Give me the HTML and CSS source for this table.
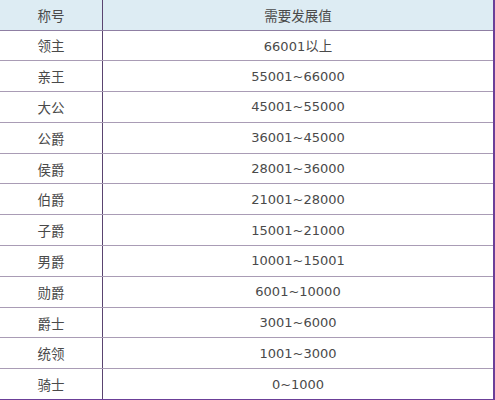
FILE: index.html
```html
<!DOCTYPE html>
<html lang="zh">
<head>
<meta charset="utf-8">
<link rel="stylesheet" href="styles.css">
</head>
<body>
<table class="rank-table">
  <thead>
    <tr><th class="c1"><span class="zh">称号</span></th><th class="c2"><span class="zh">需要发展值</span></th></tr>
  </thead>
  <tbody>
    <tr><td><span class="zh">领主</span></td><td>66001<span class="zh">以上</span></td></tr>
    <tr><td><span class="zh">亲王</span></td><td>55001~66000</td></tr>
    <tr><td><span class="zh">大公</span></td><td>45001~55000</td></tr>
    <tr><td><span class="zh">公爵</span></td><td>36001~45000</td></tr>
    <tr><td><span class="zh">侯爵</span></td><td>28001~36000</td></tr>
    <tr><td><span class="zh">伯爵</span></td><td>21001~28000</td></tr>
    <tr><td><span class="zh">子爵</span></td><td>15001~21000</td></tr>
    <tr><td><span class="zh">男爵</span></td><td>10001~15001</td></tr>
    <tr><td><span class="zh">勋爵</span></td><td>6001~10000</td></tr>
    <tr><td><span class="zh">爵士</span></td><td>3001~6000</td></tr>
    <tr><td><span class="zh">统领</span></td><td>1001~3000</td></tr>
    <tr><td><span class="zh">骑士</span></td><td>0~1000</td></tr>
  </tbody>
</table>
</body>
</html>
```
FILE: styles.css
```css
html, body {
  margin: 0;
  padding: 0;
  background: #ffffff;
}
.rank-table {
  border-collapse: collapse;
  width: 495px;
  table-layout: fixed;
  font-family: "DejaVu Sans", "Noto Sans CJK SC", sans-serif;
  font-size: 13px;
  color: #4a4a4a;
  border-right: 2px solid #6b3f98;
  border-bottom: 3px solid #6b3f98;
}
.rank-table th,
.rank-table td {
  font-weight: normal;
  text-align: center;
  padding: 0;
  height: 29.8px;
  border-bottom: 1px solid #a99cb5;
  border-left: 1px solid #5a4470;
}
.rank-table th:first-child,
.rank-table td:first-child {
  border-left: none;
}
.rank-table tbody tr:last-child td {
  border-bottom: none;
}
.rank-table thead th {
  background: #ddecf3;
  height: 29.5px;
  border-bottom: 1px solid #8f7fa3;
}
.zh {
  font-family: "Noto Sans CJK SC", sans-serif;
  font-size: 13.5px;
}
.c1 { width: 102px; }
```
